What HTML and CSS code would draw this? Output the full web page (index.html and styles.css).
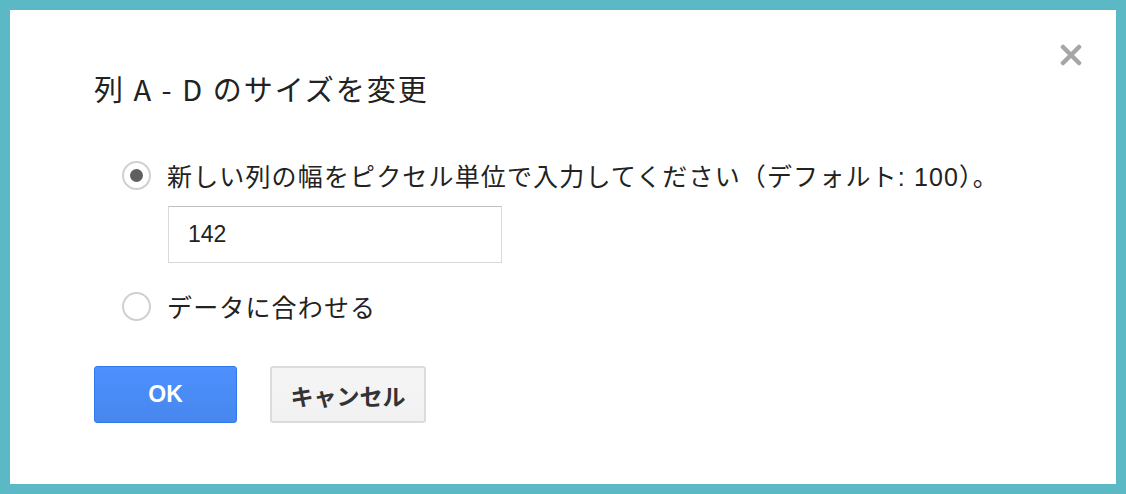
FILE: index.html
```html
<!DOCTYPE html>
<html lang="ja">
<head>
<meta charset="utf-8">
<title>列のサイズを変更</title>
<link rel="stylesheet" href="styles.css">
</head>
<body>
<div class="dialog">
  <button class="close" aria-label="閉じる">
    <svg width="22" height="22" viewBox="0 0 22 22"><path d="M3 3 L19 19 M19 3 L3 19" stroke="#a6a6a6" stroke-width="4.5" stroke-linecap="round" fill="none"/></svg>
  </button>
  <h1 class="title">列 A - D のサイズを変更</h1>
  <div class="options">
    <label class="option">
      <span class="radio checked"><span class="dot"></span></span>
      <span class="label">新しい列の幅をピクセル単位で入力してください（デフォルト: 100）。</span>
    </label>
    <div class="input-row">
      <input class="text-input" type="text" value="142">
    </div>
    <label class="option">
      <span class="radio"></span>
      <span class="label">データに合わせる</span>
    </label>
  </div>
  <div class="buttons">
    <button class="btn btn-primary">OK</button>
    <button class="btn btn-secondary">キャンセル</button>
  </div>
</div>
</body>
</html>
```

FILE: styles.css
```css
* { box-sizing: border-box; }
html, body { margin: 0; padding: 0; }
body {
  background: #5bb9c6;
  padding: 10px;
  height: 494px;
  font-family: "Liberation Sans", "Noto Sans CJK JP", Arial, sans-serif;
  color: #222;
}
.dialog {
  position: relative;
  background: #fff;
  height: 474px;
  padding: 60px 0 0 84px;
}
.close {
  position: absolute;
  top: 34px;
  right: 34px;
  width: 22px;
  height: 22px;
  padding: 0;
  border: 0;
  background: none;
  filter: blur(0.6px);
}
.close svg { display: block; }
.title {
  margin: 0;
  font-family: "Noto Sans CJK JP", sans-serif;
  font-weight: 400;
  font-size: 29px;
  line-height: 36px;
  letter-spacing: 2px;
  color: #222;
}
.options {
  margin-top: 51px;
  padding-left: 28px;
}
.option {
  display: flex;
  align-items: center;
  gap: 16px;
  height: 36px;
}
.radio {
  width: 29px;
  height: 29px;
  border: 2px solid #d0d0d0;
  border-radius: 50%;
  display: flex;
  align-items: center;
  justify-content: center;
  flex: none;
}
.dot {
  width: 13px;
  height: 13px;
  border-radius: 50%;
  background: #5f5f5f;
}
.label {
  font-size: 25px;
  letter-spacing: 1.15px;
  color: #222;
}
.input-row {
  margin: 13px 0 25px 46px;
}
.text-input {
  display: block;
  width: 334px;
  height: 57px;
  border: 1px solid #d9d9d9;
  border-top-color: #c0c0c0;
  padding: 0 0 0 19px;
  font-family: "Liberation Sans", Arial, sans-serif;
  font-size: 23px;
  color: #222;
  outline: none;
}
.buttons {
  display: flex;
  gap: 33px;
  margin-top: 42px;
}
.btn {
  height: 57px;
  border-radius: 3px;
  font-family: "Liberation Sans", "Noto Sans CJK JP", Arial, sans-serif;
  font-weight: 700;
  font-size: 23px;
  padding: 0;
}
.btn-primary {
  width: 143px;
  background: linear-gradient(#4d90fe, #4787ed);
  border: 1px solid #3079ed;
  color: #fff;
}
.btn-secondary {
  width: 156px;
  background: linear-gradient(#f5f5f5, #f1f1f1);
  border: 2px solid #dcdcdc;
  color: #333;
}
```
